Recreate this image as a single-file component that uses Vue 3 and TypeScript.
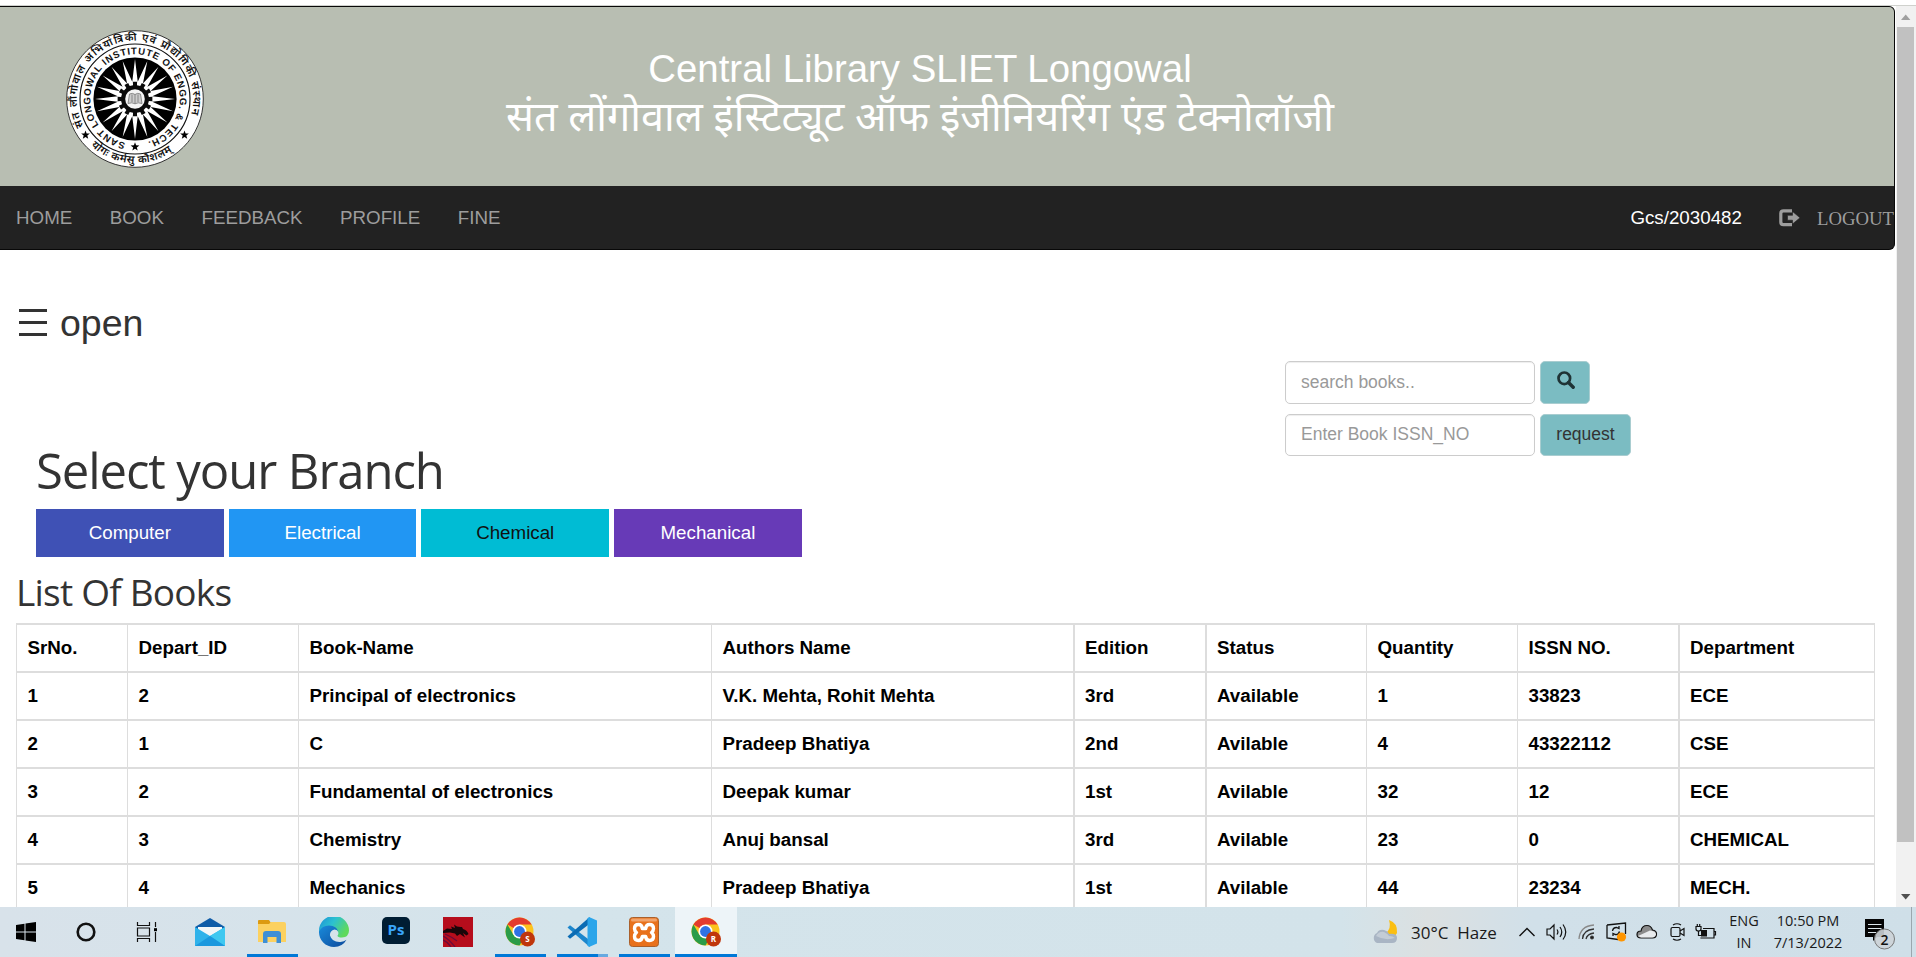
<script setup lang="ts">
interface Book {
  depart: string
  name: string
  author: string
  edition: string
  status: string
  quantity: string
  issn: string
  department: string
}

const menu: string[] = ['HOME', 'BOOK', 'FEEDBACK', 'PROFILE', 'FINE']

const branches = [
  { label: 'Computer', tone: 'indigo' },
  { label: 'Electrical', tone: 'blue' },
  { label: 'Chemical', tone: 'cyan' },
  { label: 'Mechanical', tone: 'purple' },
]

const columns = [
  { label: 'SrNo.', cls: 'c-sr' },
  { label: 'Depart_ID', cls: 'c-dep' },
  { label: 'Book-Name', cls: 'c-name' },
  { label: 'Authors Name', cls: 'c-author' },
  { label: 'Edition', cls: 'c-edition thick' },
  { label: 'Status', cls: 'c-status thick' },
  { label: 'Quantity', cls: 'c-qty' },
  { label: 'ISSN NO.', cls: 'c-issn' },
  { label: 'Department', cls: 'c-dept thick' },
]

const books: Book[] = [
  { depart: '2', name: 'Principal of electronics', author: 'V.K. Mehta, Rohit Mehta', edition: '3rd', status: 'Available', quantity: '1', issn: '33823', department: 'ECE' },
  { depart: '1', name: 'C', author: 'Pradeep Bhatiya', edition: '2nd', status: 'Avilable', quantity: '4', issn: '43322112', department: 'CSE' },
  { depart: '2', name: 'Fundamental of electronics', author: 'Deepak kumar', edition: '1st', status: 'Avilable', quantity: '32', issn: '12', department: 'ECE' },
  { depart: '3', name: 'Chemistry', author: 'Anuj bansal', edition: '3rd', status: 'Avilable', quantity: '23', issn: '0', department: 'CHEMICAL' },
  { depart: '4', name: 'Mechanics', author: 'Pradeep Bhatiya', edition: '1st', status: 'Avilable', quantity: '44', issn: '23234', department: 'MECH.' },
]

function polar(r: number, deg: number): string {
  const a = (deg * Math.PI) / 180
  return `${(r * Math.sin(a)).toFixed(2)},${(-r * Math.cos(a)).toFixed(2)}`
}

// Twenty-ray sunburst, alternating outer tips and inner valleys
const rays: string = Array.from({ length: 20 }, (_, i) => `${polar(40, i * 18)} ${polar(17.5, i * 18 + 9)}`).join(' ')

// Gear outline with twelve teeth
const gear: string = Array.from({ length: 12 }, (_, i) => {
  const c = i * 30
  return [polar(14, c - 8), polar(17.5, c - 7), polar(17.5, c + 7), polar(14, c + 8)].join(' ')
}).join(' ')

const star: string = Array.from({ length: 5 }, (_, i) => `${polar(4.6, i * 72)} ${polar(1.9, i * 72 + 36)}`).join(' ')
</script>

<template>
  <div class="screen">
    <div class="strip"></div>
    <div class="viewport">
      <main class="content">
        <header class="top">
          <div class="banner">
            <svg class="logo" viewBox="-70 -70 140 140">
              <defs>
                <path id="arc-outer" d="M-51.5,27 A58.2,58.2 0 1 1 51.5,27" />
                <path id="arc-bottom" d="M-44,46.8 A64.2,64.2 0 0 0 44,46.8" />
                <path id="arc-inner" d="M-9.5,43.8 A44.8,44.8 0 1 1 9.5,43.8" />
              </defs>
              <circle r="68.3" fill="#fff" stroke="#333" stroke-width="1" />
              <circle r="55" fill="none" stroke="#111" stroke-width="1.2" />
              <circle r="41.6" fill="#000" />
              <polygon :points="rays" fill="#fff" />
              <polygon :points="gear" fill="#0a0a0a" />
              <circle r="9.8" fill="#f4f4f4" />
              <path d="M-7,4.5 L-5.5,-5 Q-2.5,-6.5 0,-4.5 Q2.5,-6.5 5.5,-5 L7,4.5 Q3,3 0,4.8 Q-3,3 -7,4.5 Z M0,-4.5 V4.6 M-3,-4.5 V3 M3,-4.5 V3" fill="#ccc" stroke="#777" stroke-width=".8" />
              <text class="ring-hi"><textPath href="#arc-outer" textLength="226">संत लौंगोवाल अभियांत्रिकी एवं प्रौद्योगिकी संस्थान</textPath></text>
              <text class="ring-hi"><textPath href="#arc-bottom" textLength="88">योगः कर्मसु कौशलम्</textPath></text>
              <text class="ring-en"><textPath href="#arc-inner" textLength="258">SANT LONGOWAL INSTITUTE OF ENGG. &amp; TECH.</textPath></text>
              <polygon :points="star" transform="translate(0 47.8)" />
              <polygon :points="star" transform="translate(-49.5 36)" />
              <polygon :points="star" transform="translate(49.5 36)" />
            </svg>
            <div class="titles">
              <div class="title-en">Central Library SLIET Longowal</div>
              <div class="title-hi">संत लोंगोवाल इंस्टिट्यूट ऑफ इंजीनियरिंग एंड टेक्नोलॉजी</div>
            </div>
          </div>
          <nav class="nav">
            <a v-for="m in menu" :key="m" class="nav-link">{{ m }}</a>
            <span class="user">Gcs/2030482</span>
            <svg class="out-icon" viewBox="0 0 22 18">
              <path d="M13 1.8H4.5Q1.8 1.8 1.8 4.5V13Q1.8 15.700 4.5 15.700H13" fill="none" stroke="#9d9d9d" stroke-width="3.2" />
              <path d="M8.500 6.300H13.500V2.500L21 8.800 13.500 15V11.200H8.500Z" fill="#9d9d9d" stroke="#222" stroke-width=".6" />
            </svg>
            <span class="logout">LOGOUT</span>
          </nav>
        </header>

        <div class="opener">
          <span class="bars"><i></i><i></i><i></i></span>
          <span>open</span>
        </div>

        <div class="forms">
          <div class="form-row">
            <div class="field">search books..</div>
            <div class="action find">
              <svg viewBox="0 0 18 18" width="18" height="18">
                <circle cx="7.300" cy="7.300" r="5.800" fill="none" stroke="#1f3335" stroke-width="2.700" />
                <path d="M11.500 11.500L16.200 16.200" stroke="#1f3335" stroke-width="3.400" stroke-linecap="round" />
              </svg>
            </div>
          </div>
          <div class="form-row">
            <div class="field">Enter Book ISSN_NO</div>
            <div class="action">request</div>
          </div>
        </div>

        <h1>Select your Branch</h1>
        <div class="branches">
          <div v-for="b in branches" :key="b.label" class="branch" :class="b.tone">{{ b.label }}</div>
        </div>

        <h2>List Of Books</h2>
        <table>
          <thead>
            <tr>
              <th v-for="c in columns" :key="c.label" :class="c.cls">{{ c.label }}</th>
            </tr>
          </thead>
          <tbody>
            <tr v-for="(b, i) in books" :key="i">
              <td>{{ i + 1 }}</td>
              <td>{{ b.depart }}</td>
              <td>{{ b.name }}</td>
              <td>{{ b.author }}</td>
              <td class="thick">{{ b.edition }}</td>
              <td class="thick">{{ b.status }}</td>
              <td>{{ b.quantity }}</td>
              <td>{{ b.issn }}</td>
              <td class="thick">{{ b.department }}</td>
            </tr>
          </tbody>
        </table>
      </main>

      <aside class="scroll">
        <svg viewBox="0 0 20 21" width="20" height="21"><path d="M5 14L9.700 8.500 14.400 14Z" fill="#a0a0a0" /></svg>
        <div class="thumb"></div>
        <svg class="down" viewBox="0 0 20 21" width="20" height="21"><path d="M5 8L9.700 13.500 14.400 8Z" fill="#505050" /></svg>
      </aside>
    </div>

    <footer class="taskbar">
      <div class="slot s1">
        <svg width="20" height="20" viewBox="0 0 20 20"><path d="M0 3L8.500 1.800V9.500H0ZM9.500 1.600L20 0V9.500H9.500ZM0 10.500H8.500V18.200L0 17ZM9.500 10.500H20V20L9.500 18.400Z" /></svg>
      </div>
      <div class="slot s2">
        <svg width="20" height="20" viewBox="0 0 20 20"><circle cx="10" cy="10" r="8.300" fill="none" stroke="#111" stroke-width="2.600" /></svg>
      </div>
      <div class="slot s3">
        <svg width="22" height="20" viewBox="0 0 22 20"><path d="M1.500 0V3.500H13.500V0M1.500 20V16.500H13.500V20M1.500 6H13.500V14H1.500ZM19.500 0V5M19.500 10V20" fill="none" stroke="#111" stroke-width="1.200" /><rect x="18" y="6.200" width="3" height="3" /></svg>
      </div>
      <div class="slot">
        <svg width="30" height="30" viewBox="0 0 30 30">
          <path d="M0 10L15 1 30 10V20H0Z" fill="#0f5ca8" />
          <path d="M3 10H27V22H3Z" fill="#f2f6f8" />
          <path d="M0 10L15 19 30 10V29H0Z" fill="#2fb2ea" />
          <path d="M15 19L30 29V10Z" fill="#3fc8f0" />
          <path d="M0 29L15 19 30 29Z" fill="#1a98de" />
        </svg>
      </div>
      <div class="slot run">
        <svg width="28" height="26" viewBox="0 0 28 26">
          <path d="M0 2Q0 1 1 1H11L13 4V8H0Z" fill="#dc9a10" />
          <path d="M0 5H11L13 3H26Q28 3 28 5V23H0Z" fill="#fcd160" />
          <path d="M5 24V15Q5 12 8 12H20Q23 12 23 15V24H18.500V18H9.500V24Z" fill="#3d8fd6" />
        </svg>
      </div>
      <div class="slot">
        <svg width="30" height="30" viewBox="0 0 30 30">
          <defs>
            <linearGradient id="edge-top" x1="0" y1="0" x2="1" y2=".5"><stop offset="0" stop-color="#1b8fd8" /><stop offset=".5" stop-color="#2cc1d0" /><stop offset="1" stop-color="#5fd95c" /></linearGradient>
            <linearGradient id="edge-low" x1="0" y1="0" x2="1" y2="1"><stop offset="0" stop-color="#1a8bdb" /><stop offset="1" stop-color="#0c4a9c" /></linearGradient>
          </defs>
          <path d="M0 14A15 15 0 0 1 30 13.500Q30 20 23 20.500 18.500 20.500 18.500 18.500 20 17 19 14.500 17 11 12 11 4 11 0 16Z" fill="url(#edge-top)" />
          <path d="M0 14.500Q3 8.500 10 8.500 18 9 19 14.500 18 12.500 15.500 12.500 10.500 14 11 18.500 13 25.500 21.500 25 25 24.500 27.500 22.800 23.500 30 15 30A15 15 0 0 1 0 14.500Z" fill="url(#edge-low)" />
        </svg>
      </div>
      <div class="slot"><span class="ps">Ps</span></div>
      <div class="slot">
        <svg width="30" height="30" viewBox="0 0 30 30">
          <rect width="30" height="30" fill="#b60d1c" />
          <path d="M0 14L4 11.500 9 12 8 9.500 12 11 11 7.500Q14 10.500 19 10L20 12Q24 13 25.500 17L23.500 18.500 20 16 22 20.500 17 17 14 19 12 16.500 7 15.500 0 16Z" fill="#190609" />
          <path d="M0 19Q6 22 12 30M0 23Q5 25 8 30M2 17Q9 20 14 24" stroke="#6a0b3c" stroke-width="1.300" fill="none" />
        </svg>
      </div>
      <div v-for="(p, i) in ['S', 'V', 'X', 'R']" :key="p" class="slot run" :class="{ active: i === 3, multi: i === 1 }">
        <svg v-if="p === 'S' || p === 'R'" width="30" height="30" viewBox="0 0 30 30">
          <circle cx="14.500" cy="14.500" r="14" fill="#fcc31e" />
          <path d="M14.500 14.500L2.400 7.500A14 14 0 0 1 26.600 7.500H14.500Z" fill="#e33b2e" />
          <path d="M2.400 7.500A14 14 0 0 0 14.500 28.500L20.500 18 8.500 18Z" fill="#2a9c48" />
          <circle cx="14.500" cy="14.500" r="7" fill="#fff" />
          <circle cx="14.500" cy="14.500" r="5.400" fill="#2f72e4" />
          <circle cx="22.500" cy="22" r="7.500" fill="#bf360c" />
          <text x="22.500" y="25" class="badge-letter">{{ p }}</text>
        </svg>
        <svg v-else-if="p === 'V'" width="30" height="30" viewBox="0 0 30 30">
          <path d="M0.500 10.500L3 8.300 23 23.500V29.500L21.500 29Z" fill="#1c86cc" />
          <path d="M0.500 19.500L3 21.700 23 6.500V.5L21.500 1Z" fill="#0b6cb4" />
          <path d="M22 0L30 3.500V26.500L22 30 20.500 28.500V1.500Z" fill="#2ba5ea" />
        </svg>
        <svg v-else width="30" height="30" viewBox="0 0 30 30">
          <rect x=".5" y=".5" width="29" height="29" rx="3" fill="#e8711c" stroke="#a9602c" />
          <rect x="2" y="1.500" width="26" height="3" rx="1.500" fill="#f1a36b" />
          <path d="M9.500 7.500Q13 7.500 13.300 11.500H16.700Q17 7.500 20.500 7.500 24.500 7.500 24.500 11.500 24.500 14 22.500 15.500 24.500 17 24.500 19.500 24.500 23.500 20.500 23.500 17 23.500 16.700 19.500H13.300Q13 23.500 9.500 23.500 5.500 23.500 5.500 19.500 5.500 17 7.500 15.500 5.500 14 5.500 11.500 5.500 7.500 9.500 7.500Z" fill="#e8711c" stroke="#fff" stroke-width="3.400" stroke-linejoin="round" />
        </svg>
      </div>

      <div class="tray">
        <svg class="weather" width="28" height="26" viewBox="0 0 28 26">
          <path d="M18 1Q27 4 26 14 23 20 14 15 21 10 18 1Z" fill="#fbbf12" />
          <path d="M6 24A5.500 5.500 0 0 1 6 14Q8 10 13 11 17 12 18 15 26 14 26 19 26 24 21 24Z" fill="#a9b5c4" />
          <path d="M5 17Q8 12 13 13 17 15 18 17 22 17 24 19 14 22 5 17Z" fill="#c3ccd6" />
        </svg>
        <span class="weather-text">30°C&nbsp; Haze</span>
        <svg class="t-up" width="18" height="12" viewBox="0 0 18 12"><path d="M1.500 10L9 2.500 16.500 10" fill="none" stroke="#111" stroke-width="1.400" /></svg>
        <svg class="t-vol" width="22" height="20" viewBox="0 0 22 20" fill="none" stroke="#111" stroke-width="1.200"><path d="M1 7H4L8 3V17L4 13H1ZM11 7.500Q12.800 10 11 12.500M14 5Q17.500 10 14 15M17 2.500Q22.500 10 17 17.500" /></svg>
        <svg class="t-wifi" width="18" height="18" viewBox="0 0 18 18" fill="none" stroke="#333" stroke-width="1.300"><path d="M1 16Q2 3 16 2" stroke="#888" /><path d="M4.500 16Q5 7 16 6M8 16Q9 11 16 10" /><circle cx="14" cy="14.500" r="1.300" fill="#111" /></svg>
        <svg class="t-upd" width="22" height="20" viewBox="0 0 22 20" fill="none" stroke="#111" stroke-width="1.300"><path d="M1 3L19.500 1V12M1 3V16L12 17.500M6.500 9Q7 5.500 10.500 5.500L13 6.500V4M13.500 9.500Q12.500 13 9.500 12.500L7 11.500V14" /><circle cx="15.500" cy="15" r="4.600" fill="#ff9500" stroke="none" /></svg>
        <svg class="t-cloud" width="22" height="16" viewBox="0 0 22 16"><path d="M5 14Q1 14 1 10.500 1 7 5 7 6 1.500 11 1.500 15 1.500 16.500 6 20.500 6.500 20.500 10 20.500 14 16.500 14Z" fill="#8b8b8b" stroke="#111" stroke-width="1.200" /><path d="M2 12L14 6.500Q20 7 20 10.500 19 13.400 16 13.400H5Z" fill="#e8ebed" /></svg>
        <svg class="t-meet" width="16" height="20" viewBox="0 0 16 20" fill="none" stroke="#111" stroke-width="1.200"><path d="M3 3Q7 .5 11 3M3 17Q7 19.500 11 17" /><rect x="1" y="5.500" width="9" height="9" rx="1.500" /><path d="M10 9L14 6.500V13.500L10 11" /></svg>
        <svg class="t-bat" width="22" height="16" viewBox="0 0 22 16" fill="none" stroke="#111" stroke-width="1.200"><path d="M6 13.500V14H19V4.500H8M19 7.500H20.500V11H19" /><path d="M1 2.500H6V5Q6 7 3.500 7 1 7 1 5ZM2.300 0V2.500M4.700 0V2.500M3.500 7V11.500H6" /><rect x="6" y="6" width="6" height="6.500" fill="#111" stroke="none" /></svg>
        <div class="lang"><span>ENG</span><span>IN</span></div>
        <div class="clock"><span>10:50 PM</span><span>7/13/2022</span></div>
        <svg class="t-note" width="32" height="34" viewBox="0 0 32 34">
          <path d="M1 1H20V19H13L9 23V19H1Z" fill="#050505" />
          <path d="M4 6.500H17.500M4 10.500H17.500M4 14.500H12" stroke="#dce6eb" stroke-width="1.200" />
          <circle cx="20.500" cy="21" r="10" fill="#ccd3d7" fill-opacity=".9" stroke="#777" />
          <text x="20.500" y="26.500" class="note-count">2</text>
        </svg>
        <div class="desk"></div>
      </div>
    </footer>
  </div>
</template>

<style>
body {
  margin: 0;
  overflow: hidden;
}
</style>

<style scoped>
.screen {
  width: 1916px;
  height: 957px;
  display: flex;
  flex-direction: column;
  background: #fff;
  overflow: hidden;
  font-family: "Liberation Sans", Arial, sans-serif;
  font-size: 18.75px;
  color: #333;
}
.screen * { box-sizing: border-box; }
.strip { height: 6px; flex: none; border-bottom: 1px solid #cfd1cd; }
.viewport { display: flex; height: 901px; flex: none; }
.content { width: 1896px; flex: none; overflow: hidden; }
.top {
  width: 1895px;
  height: 244px;
  background: #222;
  border: 1px solid #080808;
  border-left: none;
  border-radius: 0 6px 6px 0;
  overflow: hidden;
}
.banner { display: flex; height: 179px; background: #b8beb2; padding-left: 65px; }
.logo { width: 140px; height: 140px; margin-top: 21.500px; flex: none; }
.ring-hi { font-family: "Noto Sans Devanagari", "Noto Sans", sans-serif; font-size: 10.800px; font-weight: 600; fill: #111; }
.ring-en { font-family: "Liberation Sans", Arial, sans-serif; font-size: 9.600px; font-weight: 700; fill: #111; }
.titles { width: 1430px; color: #fff; text-align: center; padding-top: 40px; white-space: nowrap; }
.title-en { font-size: 38.400px; line-height: 44px; }
.title-hi { font-family: "Nirmala UI", "Noto Sans Devanagari", "Noto Sans", sans-serif; font-size: 41.350px; font-weight: 400; line-height: 60px; }
.nav { display: flex; height: 63px; align-items: center; padding-left: 16px; color: #9d9d9d; }
.nav-link { margin-right: 37.500px; }
.user { margin-left: auto; margin-right: 37px; color: #fff; }
.out-icon { width: 22px; height: 18px; margin-right: 16px; }
.logout { font-family: "Liberation Serif", "Times New Roman", serif; padding-top: 3px; }
.opener { display: flex; align-items: center; height: 44px; margin-top: 51px; padding-left: 19px; font-size: 37.500px; gap: 13px; }
.bars { display: flex; flex-direction: column; gap: 9px; width: 28px; padding-bottom: 2px; }
.bars i { height: 3px; background: #333; }
.forms { margin: 16px 0 0 1285px; display: flex; flex-direction: column; gap: 10px; font-size: 17.500px; }
.form-row { display: flex; gap: 5px; height: 43px; }
.form-row + .form-row { height: 42px; }
.field { width: 250px; border: 1px solid #ccc; border-radius: 5px; padding: 0 15px 1px; display: flex; align-items: center; color: #999; box-shadow: inset 0 1px 1px rgba(0, 0, 0, 0.07); }
.action { width: 91px; border: 1px solid #a9cdd0; border-radius: 5px; background: #7bbcc2; display: flex; align-items: center; justify-content: center; color: #333; padding-bottom: 2px; }
.find { width: 50px; padding: 0 0 5px 1px; }
h1 { margin: 0 0 0 36px; font: 400 49px/26px "Segoe UI", "Open Sans", sans-serif; letter-spacing: -1.080px; padding-top: 1px; white-space: nowrap; }
.branches { display: flex; gap: 5px; margin: 26px 0 0 36px; }
.branch { width: 187.700px; height: 48px; display: flex; align-items: center; justify-content: center; color: #fff; }
.indigo { background: #3f51b5; }
.blue { background: #2196f3; }
.cyan { background: #00bcd4; color: #111; }
.purple { background: #673ab7; }
h2 { margin: 15px 0 11px 16px; font: 400 37px/40px "Segoe UI", "Open Sans", sans-serif; letter-spacing: -.780px; }
table { width: 1859px; margin-left: 16px; table-layout: fixed; border-collapse: separate; border-spacing: 0; color: #000; font-weight: 700; border-right: 1px solid #ddd; }
th, td { height: 48px; padding: 0 0 0 10.500px; border-top: 2px solid #ddd; border-left: 1px solid #ddd; text-align: left; white-space: nowrap; }
.thick { border-left-width: 2px; padding-left: 10px; }
.c-sr { width: 111px; }
.c-dep { width: 171px; }
.c-name { width: 413px; }
.c-author { width: 362px; }
.c-edition { width: 132px; }
.c-status { width: 161px; }
.c-qty { width: 151px; }
.c-issn { width: 161px; }
.scroll { width: 20px; background: #f1f1f1; display: flex; flex-direction: column; }
.thumb { width: 17px; height: 815px; margin-left: 1px; background: #c1c1c1; }
.down { margin-top: auto; }

.taskbar { display: flex; height: 50px; flex: none; background: linear-gradient(90deg, #d8e2ea 0, #d4e4eb 30%, #d3e3ea 70%, #dbe0e1 74.500%, #d1e0e9 80%, #cfdfe8 100%); font-family: "Segoe UI", "Open Sans", sans-serif; color: #1a1a1a; }
.slot { position: relative; width: 62px; height: 50px; display: flex; align-items: center; justify-content: center; flex: none; }
.s1 { width: 52px; }
.s2 { width: 68px; }
.s3 { width: 54px; margin-right: 5px; }
.run::after { content: ""; position: absolute; left: 6px; bottom: 0; width: 51px; height: 3px; background: #0078d7; }
.multi::after { background: linear-gradient(90deg, #0078d7 41px, #67a9e0 41px); }
.active { background: #edf4f8; }
.active::after { left: 0; width: 62px; }
.ps { width: 28px; height: 27px; border-radius: 5px; background: #001d33; color: #39a5fa; font: 700 15px/25px "Open Sans", sans-serif; text-align: center; margin-bottom: 3px; }
.badge-letter { font: 700 8px "Open Sans", sans-serif; fill: #fff; text-anchor: middle; }
.tray { display: flex; align-items: center; margin-left: auto; }
.weather-text { font-size: 17px; width: 107px; margin-left: 12px; padding-top: 1px; white-space: nowrap; }
.t-vol { margin-left: 10px; }
.t-wifi { margin-left: 10px; }
.t-upd { margin-left: 10px; }
.t-cloud { margin-left: 8px; }
.t-meet { margin-left: 12px; }
.t-bat { margin-left: 9px; }
.lang, .clock { display: flex; flex-direction: column; align-items: center; font-size: 14.500px; line-height: 22.500px; white-space: nowrap; }
.lang { width: 50px; margin-left: 2px; }
.clock { width: 78px; margin-left: 0; }
.t-note { margin-left: 17px; margin-top: 6px; }
.note-count { font: 600 14px "Open Sans", sans-serif; fill: #111; text-anchor: middle; }
.desk { width: 5px; height: 50px; margin-left: 15px; border-left: 1px solid #9aa7ae; }
</style>
